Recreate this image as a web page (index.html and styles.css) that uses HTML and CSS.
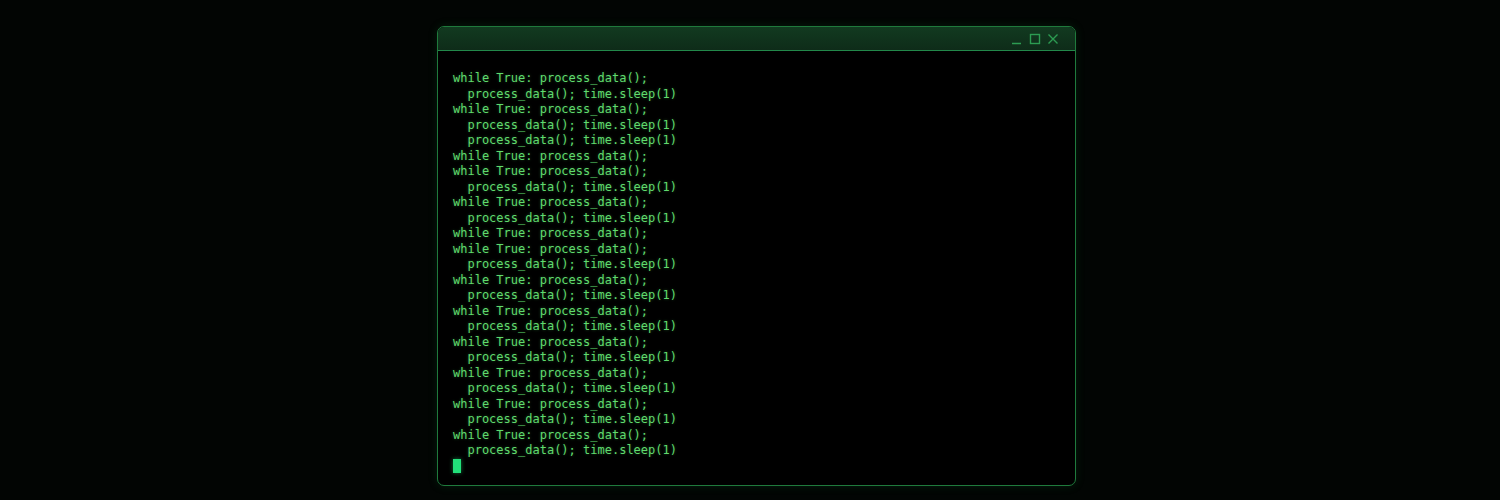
FILE: index.html
```html
<!DOCTYPE html>
<html>
<head>
<meta charset="utf-8">
<link rel="stylesheet" href="styles.css">
</head>
<body>
<div class="stage">
  <div class="window">
    <div class="titlebar">
      <div class="controls">
        <svg class="ctl" width="12" height="12" viewBox="0 0 12 12"><path d="M1 10.5H10" stroke="currentColor" stroke-width="1.4" fill="none"/></svg>
        <svg class="ctl" width="12" height="12" viewBox="0 0 12 12"><rect x="1.5" y="1.5" width="9" height="9" stroke="currentColor" stroke-width="1.4" fill="none"/></svg>
        <svg class="ctl" width="12" height="12" viewBox="0 0 12 12"><path d="M1.5 1.5L10.5 10.5M10.5 1.5L1.5 10.5" stroke="currentColor" stroke-width="1.4" fill="none"/></svg>
      </div>
    </div>
    <div class="term">
<pre class="code">while True: process_data();
  process_data(); time.sleep(1)
while True: process_data();
  process_data(); time.sleep(1)
  process_data(); time.sleep(1)
while True: process_data();
while True: process_data();
  process_data(); time.sleep(1)
while True: process_data();
  process_data(); time.sleep(1)
while True: process_data();
while True: process_data();
  process_data(); time.sleep(1)
while True: process_data();
  process_data(); time.sleep(1)
while True: process_data();
  process_data(); time.sleep(1)
while True: process_data();
  process_data(); time.sleep(1)
while True: process_data();
  process_data(); time.sleep(1)
while True: process_data();
  process_data(); time.sleep(1)
while True: process_data();
  process_data(); time.sleep(1)</pre>
      <div class="cursor"></div>
    </div>
  </div>
</div>
</body>
</html>
```
FILE: styles.css
```css
html, body {
  margin: 0;
  padding: 0;
  background: #020503;
  width: 1500px;
  height: 500px;
  overflow: hidden;
}
.stage {
  display: flex;
  justify-content: center;
  padding-top: 26px;
  padding-left: 13px;
}
.window {
  width: 637px;
  height: 458px;
  border: 1.5px solid #1f7a3c;
  border-radius: 7px;
  background: #000;
  box-shadow: 0 0 10px rgba(30, 140, 60, 0.18);
  display: flex;
  flex-direction: column;
  overflow: hidden;
}
.titlebar {
  height: 23px;
  background: linear-gradient(180deg, #123a20 0%, #0e2c19 100%);
  border-bottom: 1.5px solid #22884a;
  display: flex;
  justify-content: flex-end;
  align-items: center;
  padding-right: 16px;
}
.controls {
  display: flex;
  gap: 6px;
  color: #2c9c52;
  margin-top: 1px;
}
.ctl {
  display: block;
}
.term {
  flex: 1;
  padding: 20px 0 0 15px;
}
.code {
  margin: 0;
  font-family: "DejaVu Sans Mono", monospace;
  font-size: 12px;
  line-height: 15.5px;
  color: #60da6e;
  text-shadow: 0 0 3px rgba(80, 220, 100, 0.35);
}
.cursor {
  width: 8px;
  height: 14px;
  margin-top: 0;
  background: #22e07a;
  box-shadow: 0 0 4px rgba(40, 230, 120, 0.5);
}
```
